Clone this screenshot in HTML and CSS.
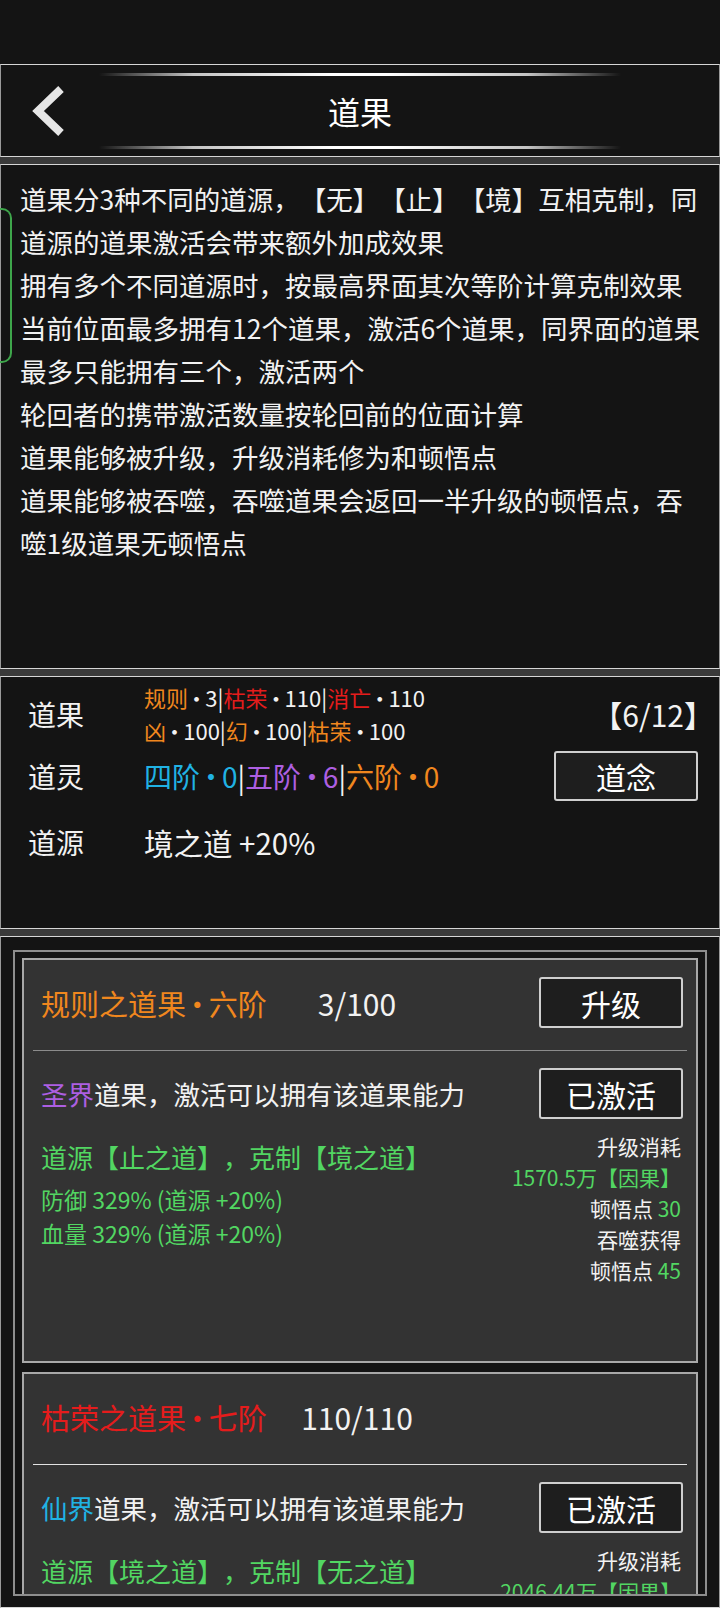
FILE: index.html
```html
<!DOCTYPE html>
<html lang="zh-CN">
<head>
<meta charset="utf-8">
<title>道果</title>
<link rel="stylesheet" href="styles.css">
</head>
<body>
<div class="status"></div>
<main class="page">
  <header class="panel topbar">
    <button class="back" aria-label="返回">
      <svg width="40" height="52" viewBox="0 0 40 52"><polyline points="33,4 10,26 33,48" fill="none" stroke="#e6e6e6" stroke-width="8"/></svg>
    </button>
    <h1 class="title">道果</h1>
  </header>

  <section class="panel rules">
    <span class="side-mark"></span>
    <p>道果分3种不同的道源，【无】【止】【境】互相克制，同道源的道果激活会带来额外加成效果</p>
    <p>拥有多个不同道源时，按最高界面其次等阶计算克制效果</p>
    <p>当前位面最多拥有12个道果，激活6个道果，同界面的道果最多只能拥有三个，激活两个</p>
    <p>轮回者的携带激活数量按轮回前的位面计算</p>
    <p>道果能够被升级，升级消耗修为和顿悟点</p>
    <p>道果能够被吞噬，吞噬道果会返回一半升级的顿悟点，吞噬1级道果无顿悟点</p>
  </section>

  <section class="panel stats">
    <div class="row row-fruit">
      <span class="label">道果</span>
      <div class="lines">
        <div><span class="orange">规则</span><span class="dot">·</span>3|<span class="red">枯荣</span><span class="dot">·</span>110|<span class="red">消亡</span><span class="dot">·</span>110</div>
        <div><span class="orange">凶</span><span class="dot">·</span>100|<span class="orange">幻</span><span class="dot">·</span>100|<span class="orange">枯荣</span><span class="dot">·</span>100</div>
      </div>
      <span class="quota">【6/12】</span>
    </div>
    <div class="row row-spirit">
      <span class="label">道灵</span>
      <div class="tiers"><span class="cyan">四阶<span class="dot">·</span>0</span>|<span class="purple">五阶<span class="dot">·</span>6</span>|<span class="orange">六阶<span class="dot">·</span>0</span></div>
      <button class="btn">道念</button>
    </div>
    <div class="row row-source">
      <span class="label">道源</span>
      <span class="value">境之道 +20%</span>
    </div>
  </section>

  <section class="panel list">
    <div class="frame">
      <article class="card">
        <div class="card-head">
          <span class="name orange">规则之道果<span class="dot">·</span>六阶</span>
          <span class="count">3/100</span>
          <button class="btn">升级</button>
        </div>
        <div class="divider"></div>
        <div class="card-act">
          <span class="desc"><span class="purple">圣界</span>道果，激活可以拥有该道果能力</span>
          <button class="btn">已激活</button>
        </div>
        <div class="card-body">
          <div class="effects">
            <div class="src">道源【止之道】，克制【境之道】</div>
            <div class="stat">防御 329% (道源 +20%)</div>
            <div class="stat">血量 329% (道源 +20%)</div>
          </div>
          <div class="cost">
            <div>升级消耗</div>
            <div class="green">1570.5万【因果】</div>
            <div>顿悟点 <span class="green">30</span></div>
            <div>吞噬获得</div>
            <div>顿悟点 <span class="green">45</span></div>
          </div>
        </div>
      </article>

      <article class="card">
        <div class="card-head">
          <span class="name red">枯荣之道果<span class="dot">·</span>七阶</span>
          <span class="count">110/110</span>
        </div>
        <div class="divider light"></div>
        <div class="card-act">
          <span class="desc"><span class="cyan">仙界</span>道果，激活可以拥有该道果能力</span>
          <button class="btn">已激活</button>
        </div>
        <div class="card-body">
          <div class="effects">
            <div class="src">道源【境之道】，克制【无之道】</div>
          </div>
          <div class="cost">
            <div>升级消耗</div>
            <div class="green">2046.44万【因果】</div>
          </div>
        </div>
      </article>
    </div>
  </section>
</main>
</body>
</html>
```

FILE: styles.css
```css
* { box-sizing: border-box; }

body {
  margin: 0;
  width: 720px;
  height: 1608px;
  overflow: hidden;
  background: #141414;
  color: #f2f2f2;
  font-family: "Noto Sans CJK SC", "Noto Sans", sans-serif;
  text-spacing-trim: space-all;
}

.status { height: 64px; background: #141414; }

.page {
  display: flex;
  flex-direction: column;
  gap: 7px;
  background: #3a3a3a;
}

.panel {
  position: relative;
  background: #141414;
  border: 1px solid #d6d6d6;
  border-left-color: #9a9a9a;
  border-right-color: #9a9a9a;
}

.dot { margin: 0 -0.11em; }

/* header */
.topbar {
  height: 93px;
  display: grid;
  grid-template-columns: 1fr auto 1fr;
  align-items: center;
}
.topbar::before,
.topbar::after {
  content: "";
  position: absolute;
  left: 98px;
  right: 98px;
  height: 3px;
  background: linear-gradient(90deg, rgba(255,255,255,0) 0%, rgba(255,255,255,0.75) 18%, #ffffff 45%, #ffffff 55%, rgba(255,255,255,0.75) 82%, rgba(255,255,255,0) 100%);
}
.topbar::before { top: 8px; }
.topbar::after { top: 81px; }

.back {
  justify-self: start;
  margin-left: 27px;
  padding: 0;
  border: 0;
  background: none;
  display: flex;
}
.title {
  margin: 0;
  font-size: 32px;
  font-weight: 400;
  line-height: 1;
  color: #fff;
}

/* rules */
.rules {
  height: 505px;
  padding: 12px 17px 0 19px;
}
.rules p {
  margin: 0;
  font-size: 26.5px;
  line-height: 43px;
}
.side-mark {
  position: absolute;
  left: -1px;
  top: 43px;
  width: 12px;
  height: 155px;
  border: 2px solid #3ea64b;
  border-left: 0;
  border-radius: 0 10px 10px 0;
}

/* stats */
.stats {
  height: 253px;
  padding: 4px 21px 0 27px;
}
.row {
  display: flex;
  align-items: center;
}
.label {
  flex: none;
  width: 116px;
  font-size: 28px;
}
.lines {
  font-size: 22px;
  line-height: 33px;
}
.quota {
  margin-left: auto;
  margin-right: -16px;
  font-size: 30px;
}
.row-spirit { margin-top: 4px; height: 50px; }
.tiers { font-size: 28px; }
.row-spirit .btn { margin-left: auto; height: 50px; }
.row-source { margin-top: 21px; line-height: 40px; }
.value { font-size: 29.5px; }

/* buttons */
.btn {
  flex: none;
  width: 144px;
  height: 51px;
  padding: 0;
  display: flex;
  align-items: center;
  justify-content: center;
  border: 2px solid #cfcfcf;
  border-radius: 3px;
  background: #1e1e1e;
  color: #ffffff;
  font-family: inherit;
  font-size: 30px;
}

/* list */
.list {
  height: 672px;
  padding: 13px 12px 0 12px;
}
.frame {
  height: 646px;
  overflow: hidden;
  border: 2px solid #8e8e8e;
  padding: 6px 7px;
  display: flex;
  flex-direction: column;
  gap: 9px;
  background: #141414;
}
.card {
  flex: none;
  height: 405px;
  border: 2px solid #a8a8a8;
  background: #333333;
  padding: 17px 9px 0;
}
.card-head {
  display: flex;
  align-items: center;
  height: 51px;
  padding: 0 4px 0 8px;
}
.name {
  width: 251px;
  font-size: 29px;
  white-space: nowrap;
}
.count {
  width: 130px;
  text-align: center;
  font-size: 30px;
}
.card-head .btn { margin-left: auto; }
.divider {
  margin-top: 22px;
  height: 1px;
  background: #8c8c8c;
}
.divider.light { background: #e2e2e2; }
.card-act {
  margin-top: 17px;
  display: flex;
  align-items: center;
  height: 51px;
  padding: 0 4px 0 8px;
}
.desc { font-size: 26.5px; }
.card-act .btn { margin-left: auto; }
.card-body {
  display: flex;
  justify-content: space-between;
  padding: 0 6px 0 8px;
}
.effects {
  margin-top: 20px;
  color: #52d662;
}
.src {
  font-size: 26px;
  line-height: 36px;
  margin-bottom: 7px;
}
.stat {
  font-size: 23px;
  line-height: 34px;
}
.cost {
  margin-top: 12px;
  text-align: right;
  font-size: 21px;
  line-height: 31px;
}

/* colours */
.orange { color: #f0871e; }
.red { color: #e51c1c; }
.cyan { color: #20b2e4; }
.purple { color: #ad5fe2; }
.green { color: #52d662; }
```
